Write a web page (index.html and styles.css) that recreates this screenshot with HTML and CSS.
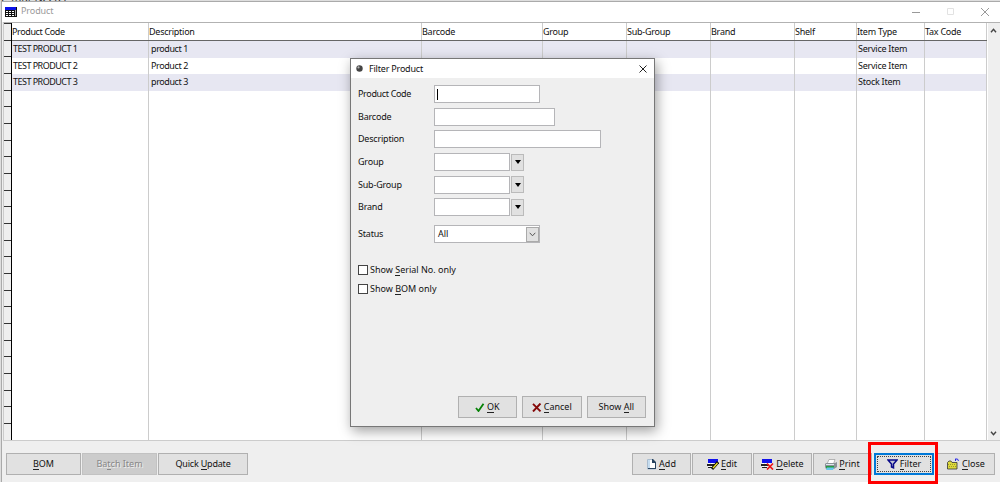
FILE: index.html
```
<!DOCTYPE html>
<html lang="en">
<head>
<meta charset="utf-8">
<title>Product</title>
<link rel="stylesheet" href="styles.css">
</head>
<body>
<div class="backdrop"><span class="behind">e Your Needs</span></div>
<main class="window">
  <header class="titlebar">
    <svg class="app-icon" width="12" height="10" viewBox="0 0 12 10"><path fill="#111" d="M0 0h12v10H0z"/><path fill="#0a12e8" d="M0 0h11v3H0z"/><path fill="#fff" d="M1 4h2v1H1zM4 4h2v1H4zM7 4h2v1H7zM1 6h2v1H1zM4 6h2v1H4zM7 6h2v1H7zM1 8h2v1H1zM4 8h2v1H4zM7 8h2v1H7z"/><path fill="#aaa" d="M10 3h1v6h-1z"/></svg>
    <h1 class="title">Product</h1>
    <svg class="window-controls" width="80" height="12" viewBox="0 0 80 12" fill="none"><path d="M0 6.500h8" stroke="#999"/><path d="M35.500 2.500h6v6h-6z" stroke="#e2e2e2"/><path d="M69 2l8 8M77 2l-8 8" stroke="#999"/></svg>
  </header>
  <section class="table">
    <div class="gutter"></div>
    <div class="col code"><b>Product Code</b><i>TEST PRODUCT 1</i><i>TEST PRODUCT 2</i><i>TEST PRODUCT 3</i></div>
    <div class="col desc"><b>Description</b><i>product 1</i><i>Product 2</i><i>product 3</i></div>
    <div class="col barcode"><b>Barcode</b><i></i><i></i><i></i></div>
    <div class="col group"><b>Group</b><i></i><i></i><i></i></div>
    <div class="col group"><b>Sub-Group</b><i></i><i></i><i></i></div>
    <div class="col group"><b>Brand</b><i></i><i></i><i></i></div>
    <div class="col shelf"><b>Shelf</b><i></i><i></i><i></i></div>
    <div class="col type"><b>Item Type</b><i>Service Item</i><i>Service Item</i><i>Stock Item</i></div>
    <div class="col tax"><b>Tax Code</b><i></i><i></i><i></i></div>
    <div class="scrollbar">
      <svg width="7" height="5" viewBox="0 0 7 5" fill="none" stroke="#444" stroke-width="1.4"><path d="M1 4.300l2.500-3 2.500 3"/></svg>
      <svg width="7" height="5" viewBox="0 0 7 5" fill="none" stroke="#444" stroke-width="1.4"><path d="M1 .7l2.500 3 2.500-3"/></svg>
    </div>
  </section>
  <footer class="toolbar">
    <button class="btn bom"><span><u>B</u>OM</span></button>
    <button class="btn batch" disabled><span>Ba<u>t</u>ch Item</span></button>
    <button class="btn quick"><span>Quick <u>U</u>pdate</span></button>
    <span class="spacer"></span>
    <button class="btn add"><svg width="10" height="11" viewBox="0 0 10 11"><path fill="#fff" stroke="#a9bccf" d="M.5.5h5l3 3v6.500h-8z"/><path fill="#c5dcef" d="M1 1h2v8H1z"/><path fill="#29445f" d="M5 0h1l3 3v1H5zM8 3h1v7H1V9h7z"/></svg><span><u>A</u>dd</span></button>
    <button class="btn edit"><svg width="12" height="11" viewBox="0 0 12 11"><path fill="#1111ed" d="M1 0h10v4H1z"/><path fill="#222" d="M0 5h10v2H0zM1 8h5v1H1z"/><path stroke="#fff" stroke-dasharray="2 1" d="M1 4.500h9M1 7.500h7"/><path stroke="#111" stroke-width="3" d="M11 3l-6 7"/><path stroke="#f3e728" stroke-width="1.300" d="M10.500 4L6 9"/></svg><span><u>E</u>dit</span></button>
    <button class="btn delete"><svg width="13" height="11" viewBox="0 0 13 11"><path fill="#1111ed" d="M1 0h10v4H1z"/><path fill="#222" d="M0 5h8v2H0zM1 8h5v1H1z"/><path stroke="#fff" stroke-dasharray="2 1" d="M1 4.500h9M1 7.500h6"/><path stroke="#f01515" stroke-width="1.700" d="M6 4.500l6 6M12 4.500l-6 6"/></svg><span><u>D</u>elete</span></button>
    <button class="btn print"><svg width="12" height="11" viewBox="0 0 12 11"><path fill="#fff" stroke="#999" stroke-width=".7" d="M4 .5h6L8.500 5H2z"/><path fill="#8c9298" d="M1 4h9l2-1v5l-3 2H1L0 8V5z"/><path fill="#dfe8ef" d="M1 5h8v1H1z"/><path fill="#289b42" d="M1 7h8v2H1z"/><path fill="#67c6ec" d="M2 8.500h7L8 11H1z"/></svg><span><u>P</u>rint</span></button>
    <button class="btn filter"><svg width="11" height="10" viewBox="0 0 11 10"><path fill="#bfc3d4" stroke="#080889" stroke-width="1.500" d="M1 1h9L6.500 5v3.800L4.500 8V5z"/></svg><span><u>F</u>ilter</span></button>
    <button class="btn close"><svg width="13" height="12" viewBox="0 0 13 12"><path fill="#ddd93b" stroke="#333" stroke-width=".8" d="M.5 11V4.500L2 3h2l1 1.500h5V11z"/><path fill="none" stroke="#9c982b" stroke-dasharray="1 1" d="M1 6.500h8M2 8.500h8"/><path fill="none" stroke="#2525e9" d="M8.500 3V.8M8.500 1h2l1 2"/></svg><span><u>C</u>lose</span></button>
  </footer>
</main>
<div class="highlight"></div>
<section class="dialog">
  <header class="dialog-title">
    <svg width="7" height="7" viewBox="0 0 7 7"><circle cx="3.500" cy="3.500" r="3.200" fill="#444"/><circle cx="2.500" cy="2.400" r="1.100" fill="#b5b5b5"/></svg>
    <h2>Filter Product</h2>
    <svg class="dialog-close" width="8" height="8" viewBox="0 0 8 8"><path d="M.5.5l7 7M7.500.5l-7 7" stroke="#222"/></svg>
  </header>
  <form class="form">
    <div class="field"><label>Product Code</label><span class="input w106"><span class="caret"></span></span></div>
    <div class="field"><label>Barcode</label><span class="input w121"></span></div>
    <div class="field"><label>Description</label><span class="input w167"></span></div>
    <div class="field"><label>Group</label><span class="input w76"></span><span class="drop"></span></div>
    <div class="field"><label>Sub-Group</label><span class="input w76"></span><span class="drop"></span></div>
    <div class="field"><label>Brand</label><span class="input w76"></span><span class="drop"></span></div>
    <div class="field status"><label>Status</label><span class="input w106 select">All<span class="arrow"><svg width="7" height="5" viewBox="0 0 7 5" fill="none" stroke="#555"><path d="M.7.8l2.800 3 2.800-3"/></svg></span></span></div>
    <div class="check first"><span class="box"></span><span>Show <u>S</u>erial No. only</span></div>
    <div class="check"><span class="box"></span><span>Show <u>B</u>OM only</span></div>
  </form>
  <div class="actions">
    <button class="btn"><svg width="10" height="9" viewBox="0 0 10 9"><path d="M1 5l2.500 3L8.500.8" fill="none" stroke="#078207" stroke-width="1.800"/></svg><span><u>O</u>K</span></button>
    <button class="btn"><svg width="10" height="9" viewBox="0 0 10 9"><path d="M1 .8l7.500 7.500M8.500.5L1 8.500" stroke="#850909" stroke-width="1.900"/></svg><span><u>C</u>ancel</span></button>
    <button class="btn"><span>Show <u>A</u>ll</span></button>
  </div>
</section>
</body>
</html>
```
FILE: styles.css
```
* { box-sizing: border-box; }
body { margin: 0; width: 1002px; height: 486px; overflow: hidden; background: #fff; font: 9px/12px "Noto Sans", "Open Sans", sans-serif; color: #111; position: relative; }
h1, h2 { margin: 0; font: inherit; }
u { text-decoration: none; box-shadow: 0 1px #222; display: inline-block; height: 10px; line-height: 10px; }
.backdrop { position: absolute; inset: 0 2px 4px 0; background: #dedede; overflow: hidden; }
.behind { position: absolute; left: 1px; top: -8px; color: #333; font-size: 11px; letter-spacing: -.3px; }
.window { position: absolute; left: 1px; top: 1px; width: 999px; height: 481px; background: #efefef; border-left: 1px solid #aaa; border-top: 1px solid #aaa; }
.titlebar { height: 20px; background: #fff; display: flex; align-items: center; padding: 0 8px 0 3px; }
.title { margin-left: 4px; color: #999; flex: 1; font-size: 9px; letter-spacing: -.1px; position: relative; top: -1px; }
.table { display: flex; height: 419px; margin-left: 1px; border-top: 1px solid #b2b2b2; border-left: 1px solid #ccc; border-bottom: 1px solid #ccc; background: #fff; }
.gutter { width: 8px; border-right: 1px solid #000; background: repeating-linear-gradient(#efefef 0 15.67px, #333 15.67px 16.67px) 0 1px; }
.col { border-right: 1px solid #ccc; white-space: nowrap; letter-spacing: -.25px; }
.col b, .col i { display: block; font-weight: 400; font-style: normal; }
.col b { height: 18px; padding-top: 3px; border-bottom: 1px solid #666; margin-right: -1px; }
.col i { height: 16.67px; padding: 2px 0 0 1px; }
.col i:nth-child(even) { background: #e7e7f2; }
.code { width: 137px; }
.code b { letter-spacing: -.38px; }
.code i { letter-spacing: -.52px; }
.desc { width: 273px; }
.desc i { letter-spacing: -.4px; padding-left: 2px; }
.barcode { width: 121px; }
.group { width: 84px; }
.shelf { width: 62px; }
.type { width: 68px; }
.tax { width: 62px; }
.scrollbar { flex: 1; margin-left: 1px; background: #efefef; display: flex; flex-direction: column; justify-content: space-between; align-items: center; padding: 5px 1px 4px 0; }
.toolbar { display: flex; padding: 12px 5px 0 4px; }
.btn { font: inherit; color: inherit; display: flex; align-items: center; justify-content: center; height: 22px; padding: 0; gap: 2px; white-space: nowrap; border: 1px solid #b0b0b0; border-radius: 0; background: #e1e1e1; }
.btn svg { flex: none; }
.bom { width: 75px; }
.batch { width: 75px; margin: 0 1px; background: #ccc; border-color: #c2c2c2; color: #888; text-shadow: 1px 1px #eee; }
.batch u { box-shadow: 0 1px #888; }
.quick { width: 90px; letter-spacing: -.2px; }
.spacer { flex: 1; }
.add { width: 59px; }
.edit { width: 60px; margin: 0 1px; }
.delete { width: 59px; }
.print { width: 59px; margin: 0 2px 0 1px; }
.filter { width: 60px; border: 1px solid #0078d7; outline: 1px dotted #444; outline-offset: -4px; box-shadow: inset 0 0 0 1px #0078d7; }
.close { width: 58px; margin-left: 3px; }
.highlight { position: absolute; left: 868px; top: 442px; width: 70px; height: 42px; border: 3px solid #f00; }
.dialog { position: absolute; left: 350px; top: 58px; width: 305px; height: 369px; border: 1px solid #777; background: #efefef; box-shadow: 2px 4px 12px rgba(0,0,0,.38); display: flex; flex-direction: column; }
.dialog-title { height: 19px; display: flex; align-items: center; background: #fff; padding: 0 7px 0 5px; }
.dialog-title h2 { margin-left: 6px; flex: 1; letter-spacing: -.2px; }
.form { padding: 7px 7px 0; flex: 1; }
.field { display: flex; align-items: center; height: 18px; margin-bottom: 4.700px; }
.field label { width: 76px; letter-spacing: -.2px; }
.field:first-child label { letter-spacing: -.35px; }
.input { height: 18px; background: #fff; border: 1px solid #b5b5b8; display: flex; align-items: center; }
.w106 { width: 106px; }
.w121 { width: 121px; }
.w167 { width: 167px; }
.w76 { width: 76px; }
.caret { width: 1px; height: 11px; margin-left: 2px; background: #000; }
.drop { width: 13px; height: 17px; margin-left: 1px; border: 1px solid #bbb; background: #e1e1e1; display: flex; align-items: center; justify-content: center; }
.drop::before { content: ""; border: 3.5px solid transparent; border-top: 4px solid #000; border-bottom: 0; }
.field.status { margin-top: 9px; }
.select { padding-left: 3px; justify-content: space-between; }
.arrow { width: 13px; height: 15px; border: 1px solid #aaa; background: #e1e1e1; display: flex; align-items: center; justify-content: center; }
.check { display: flex; align-items: center; height: 12px; gap: 2px; margin-bottom: 7px; }
.first { margin-top: 20.300px; }
.box { width: 10px; height: 10px; border: 1px solid #444; background: #fff; }
.actions { display: flex; justify-content: flex-end; gap: 5px; padding: 0 8px 8px; }
.actions .btn { width: 59.5px; }
```
